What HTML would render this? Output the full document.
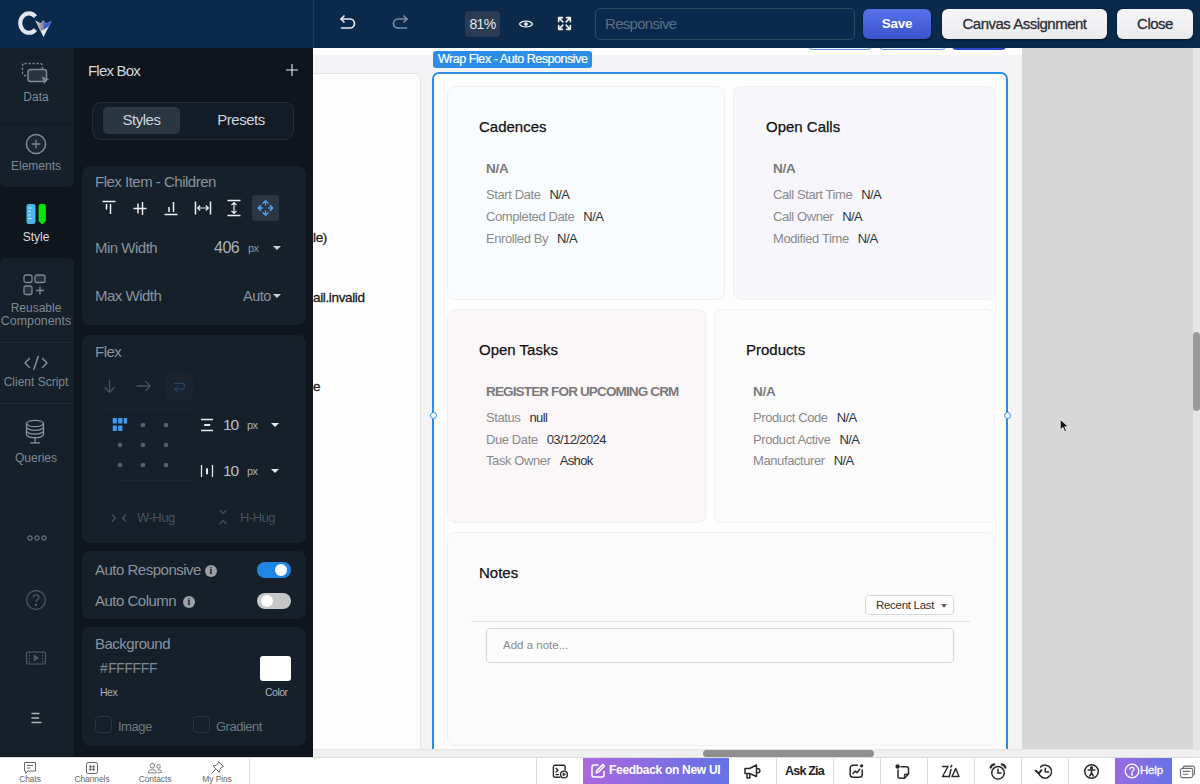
<!DOCTYPE html>
<html lang="en">
<head>
<meta charset="utf-8">
<title>Canvas Builder</title>
<style>
*{box-sizing:border-box;margin:0;padding:0}
html,body{width:1200px;height:784px;overflow:hidden;background:#f2f3f5;font-family:"Liberation Sans",sans-serif;}
.abs{position:absolute}
#root{position:relative;width:1200px;height:784px;overflow:hidden}
/* top bar */
#topbar{position:absolute;left:0;top:0;width:1200px;height:48px;background:#0a294b}
#topbar .sep{position:absolute;left:313px;top:0;width:1px;height:48px;background:#1d3857}
.tbtn{position:absolute;top:10px;height:28px;border-radius:6px;background:linear-gradient(#f6f6f8,#ebebee);color:#2a2e36;letter-spacing:-.5px;-webkit-text-stroke:.3px #2a2e36;font-size:15px;line-height:28px;text-align:center;box-shadow:0 1px 2px rgba(0,0,0,.5)}
/* sidebar */
#side{position:absolute;left:0;top:48px;width:74px;height:709px;background:#0f151d}
.sbg{position:absolute;left:0;width:74px;background:#15202b;border-radius:6px}
.sitem{position:absolute;left:0;width:72px;text-align:center;color:#7d8894;font-size:12px;line-height:14px}
/* panel */
#panel{letter-spacing:-.5px;position:absolute;left:74px;top:48px;width:239px;height:709px;background:#0f151d}
.card{position:absolute;left:8px;width:224px;background:#15202b;border-radius:8px}
.lbl{position:absolute;color:#8a939e;font-size:15px;line-height:18px;white-space:nowrap}
.tri{position:absolute;width:0;height:0;border-left:4px solid transparent;border-right:4px solid transparent;border-top:4.5px solid #c9ced4}
.info{position:absolute;width:12px;height:12px;margin-top:-.5px;border-radius:6px;background:#9aa2ab;color:#15202b;font-size:10px;line-height:12px;font-weight:bold;text-align:center;letter-spacing:0;font-family:"Liberation Serif",serif}
/* canvas */
#canvas{position:absolute;left:313px;top:48px;width:887px;height:709px;background:#f4f4f7;overflow:hidden}
.wcard{position:absolute;border:1px solid #eef0f3;border-radius:8px}
.h{position:absolute;font-size:15px;color:#111;white-space:nowrap;line-height:18px;-webkit-text-stroke:.25px #111}
.na{position:absolute;letter-spacing:-.3px;font-size:13.5px;font-weight:bold;color:#7a7a7a;white-space:nowrap;line-height:16px}
.f{position:absolute;letter-spacing:-.4px;font-size:13px;color:#8a8a8a;white-space:nowrap;line-height:16px}
.f b{font-weight:normal;color:#2b323b;margin-left:9px;letter-spacing:-.6px}
.lt{font-size:13.5px;line-height:16px;color:#1a1a1a;white-space:nowrap;letter-spacing:-.35px;-webkit-text-stroke:.3px #1a1a1a}
.hd{width:7px;height:7px;margin:.5px;border-radius:4px;border:1.3px solid #2b8de8;background:#fff}
/* bottom */
#bottom{position:absolute;left:0;top:757px;width:1200px;height:27px;background:#fff;border-top:1px solid #dcdcdc}
.bl{position:absolute;top:16px;width:40px;text-align:center;font-size:8.5px;line-height:10px;color:#666;white-space:nowrap;letter-spacing:-.1px}
.vs{position:absolute;top:0;width:1px;height:27px;background:#dcdcdc}
</style>
</head>
<body>
<div id="root">

<!-- CANVAS -->
<div id="canvas">
<div class="abs" style="left:0;top:0;width:709px;height:7px;background:#fdfdfe"></div>
<div class="abs" style="left:709px;top:0;width:171px;height:709px;background:#d7d7d7"></div>
<div class="abs" style="left:880px;top:0;width:7px;height:709px;background:#e6e6e6"></div>
<div class="abs" style="left:495px;top:-20px;width:64px;height:22px;border:1px solid #6a9ae6;border-radius:4px;background:#f4f8ff"></div>
<div class="abs" style="left:566px;top:-20px;width:67px;height:22px;border:1px solid #6a9ae6;border-radius:4px;background:#f4f8ff"></div>
<div class="abs" style="left:639px;top:-20px;width:54px;height:22px;border-radius:4px;background:#2f48d6"></div>
<div class="abs" style="left:-10px;top:25px;width:118px;height:700px;border:1px solid #e3e5e9;border-radius:7px;background:#fdfdfd"></div>
<div class="abs lt" style="left:0;top:182px">le)</div>
<div class="abs lt" style="left:0;top:242px">ail.invalid</div>
<div class="abs lt" style="left:0;top:331px">e</div>
<div class="abs" style="left:120px;top:3px;width:159px;height:17px;border-radius:3px;background:#2b8de8;color:#fff;font-size:12.5px;line-height:16px;padding-left:5px;white-space:nowrap;letter-spacing:-.45px;-webkit-text-stroke:.2px #fff">Wrap Flex - Auto Responsive</div>
<div class="abs" style="left:119px;top:24px;width:576px;height:700px;border:2px solid #2b8de8;border-radius:7px;background:#fdfdfe"></div>
<div class="wcard" style="left:134px;top:38px;width:278px;height:214px;background:#f9fcfe"></div>
<div class="wcard" style="left:420px;top:38px;width:263px;height:214px;background:#f6f6fb"></div>
<div class="wcard" style="left:134px;top:261px;width:259px;height:214px;background:#fbf6f8"></div>
<div class="wcard" style="left:401px;top:261px;width:281px;height:214px;background:#fbfbfc"></div>
<div class="wcard" style="left:134px;top:484px;width:548px;height:214px;background:#fbfbfc"></div>
<div class="h" style="left:166px;top:70px">Cadences</div>
<div class="na" style="left:173px;top:112.5px;">N/A</div>
<div class="f" style="left:173px;top:139px">Start Date<b>N/A</b></div>
<div class="f" style="left:173px;top:160.7px">Completed Date<b>N/A</b></div>
<div class="f" style="left:173px;top:182.5px">Enrolled By<b>N/A</b></div>
<div class="h" style="left:453px;top:70px">Open Calls</div>
<div class="na" style="left:460px;top:112.5px;">N/A</div>
<div class="f" style="left:460px;top:139px">Call Start Time<b>N/A</b></div>
<div class="f" style="left:460px;top:160.7px">Call Owner<b>N/A</b></div>
<div class="f" style="left:460px;top:182.5px">Modified Time<b>N/A</b></div>
<div class="h" style="left:166px;top:293px">Open Tasks</div>
<div class="na" style="left:173px;top:335.5px;width:194px;overflow:hidden;letter-spacing:-.85px">REGISTER FOR UPCOMING CRM W</div>
<div class="f" style="left:173px;top:361.5px">Status<b>null</b></div>
<div class="f" style="left:173px;top:383.5px">Due Date<b>03/12/2024</b></div>
<div class="f" style="left:173px;top:405.3px">Task Owner<b>Ashok</b></div>
<div class="h" style="left:433px;top:293px">Products</div>
<div class="na" style="left:440px;top:335.5px;">N/A</div>
<div class="f" style="left:440px;top:361.5px">Product Code<b>N/A</b></div>
<div class="f" style="left:440px;top:383.5px">Product Active<b>N/A</b></div>
<div class="f" style="left:440px;top:405.3px">Manufacturer<b>N/A</b></div>
<div class="h" style="left:166px;top:516px">Notes</div>
<div class="abs" style="left:552px;top:547px;width:89px;height:20px;border:1px solid #d6d8dc;border-radius:4px;background:#fff;font-size:11.5px;line-height:18px;color:#333;padding-left:10px;white-space:nowrap;letter-spacing:-.3px">Recent Last<span class="tri" style="left:75px;top:8px;border-top-color:#666;border-left-width:3.5px;border-right-width:3.5px;border-top-width:4px"></span></div>
<div class="abs" style="left:158px;top:573px;width:499px;height:1px;background:#e2e3e6"></div>
<div class="abs" style="left:173px;top:580px;width:468px;height:35px;border:1px solid #d6d8dc;border-radius:4px;background:#fcfcfc;font-size:11.5px;line-height:33px;color:#8a8a8a;padding-left:16px">Add a note...</div>
<div class="abs hd" style="left:116px;top:363px"></div><div class="abs hd" style="left:690px;top:363px"></div>
<div class="abs" style="left:0;top:701px;width:887px;height:9px;background:#f0f0f0;border-top:1px solid #e4e4e4"></div>
<div class="abs" style="left:390px;top:702px;width:171px;height:7px;border-radius:4px;background:#8e8e8e"></div>
<div class="abs" style="left:880px;top:284px;width:7px;height:79px;border-radius:4px;background:#9b9b9b"></div>
<svg class="abs" style="left:746px;top:370px" width="11" height="16" viewBox="0 0 14 20"><path d="M1.5 1.5V15L5 11.8L7.3 17.3L9.6 16.3L7.3 11H12Z" fill="#111" stroke="#f4f4f4" stroke-width="1.1"/></svg>
</div>

<!-- SIDEBAR -->
<div id="side">
<div class="sbg" style="top:0;height:139px;border-radius:0 0 6px 6px"></div>
<div class="abs" style="left:0;top:75px;width:73px;height:2px;background:#131c26"></div>
<div class="sbg" style="top:210px;height:84px;border-radius:6px 6px 0 0"></div>
<div class="sbg" style="top:295px;height:60px;border-radius:0"></div>
<div class="sbg" style="top:356px;height:353px;border-radius:0"></div>
<div class="abs" style="left:0;top:294px;width:73px;height:1px;background:#1f2a35"></div>
<div class="abs" style="left:0;top:355px;width:73px;height:1px;background:#1f2a35"></div>
<!-- Data -->
<svg class="abs" style="left:20px;top:13px" width="32" height="26" viewBox="0 0 32 26" fill="none">
 <rect x="2.5" y="2.5" width="20" height="12" rx="2" stroke="#7d8894" stroke-width="1.3" stroke-dasharray="2.2 1.8"/>
 <rect x="8" y="8.5" width="18.5" height="12" rx="2.5" fill="#2a3440" stroke="#7d8894" stroke-width="1.5"/>
 <path d="M21.5 15.5 L29.5 18.2 L26 19.6 L24.6 23.2 Z" fill="#7d8894"/>
</svg>
<div class="sitem" style="top:42px">Data</div>
<!-- Elements -->
<svg class="abs" style="left:25px;top:85px" width="22" height="22" viewBox="0 0 22 22" fill="none" stroke="#7d8894" stroke-width="1.3">
 <circle cx="11" cy="11" r="9.6" fill="#1c2732" stroke-width="1.5"/><path d="M11 6.8V15.2M6.8 11H15.2"/>
</svg>
<div class="sitem" style="top:111px">Elements</div>
<!-- Style -->
<svg class="abs" style="left:25px;top:155px" width="22" height="22" viewBox="0 0 22 22">
 <rect x="1.5" y="1" width="9" height="20" rx="2.2" fill="#49b6ee"/>
 <path d="M3.5 5h3M3.5 8.5h2M3.5 12h2M3.5 15.5h3" stroke="#d9f0fb" stroke-width="1"/>
 <path d="M13.6 3.2 a2.2 2.2 0 0 1 2.2-2.2 h2.9 a2.2 2.2 0 0 1 2.2 2.2 V17 Q20.9 18 19.5 19.6 Q17.8 21.4 17.2 21.4 Q16.6 21.4 15 19.6 Q13.6 18 13.6 17Z" fill="#05e40a"/>
</svg>
<div class="sitem" style="top:182px;color:#dedede">Style</div>
<!-- Reusable -->
<svg class="abs" style="left:23px;top:226px" width="24" height="22" viewBox="0 0 24 22" fill="none" stroke="#7d8894" stroke-width="1.3">
 <rect x="1" y="1" width="8" height="7.5" rx="2"/><rect x="12" y="1" width="10" height="7.5" rx="2" fill="#27313c"/>
 <rect x="1" y="12" width="8" height="8.5" rx="2" fill="#27313c"/><path d="M17 12.5V20.5M13 16.5H21"/>
</svg>
<div class="sitem" style="top:253.5px;line-height:13px;font-size:12px">Reusable<br><span style="font-size:12.4px">Components</span></div>
<!-- Client Script -->
<svg class="abs" style="left:23px;top:307px" width="26" height="16" viewBox="0 0 26 16" fill="none" stroke="#8a949f" stroke-width="1.4" stroke-linecap="round" stroke-linejoin="round">
 <path d="M6.5 3.5 L2 8 L6.5 12.5"/><path d="M19.5 3.5 L24 8 L19.5 12.5"/><path d="M15.2 1.5 L10.8 14.5"/>
</svg>
<div class="sitem" style="top:327px">Client Script</div>
<!-- Queries -->
<svg class="abs" style="left:24px;top:371px" width="22" height="26" viewBox="0 0 22 26" fill="none" stroke="#8a949f" stroke-width="1.3">
 <ellipse cx="11" cy="4.5" rx="8.5" ry="3.2"/><path d="M2.5 4.5V15.5C2.5 17.3 6.3 18.7 11 18.7S19.5 17.3 19.5 15.5V4.5"/>
 <path d="M2.5 8.2C2.5 10 6.3 11.4 11 11.4S19.5 10 19.5 8.2M2.5 11.9C2.5 13.7 6.3 15.1 11 15.1S19.5 13.7 19.5 11.9"/>
 <path d="M11 18.7V23.5M6 23.8H16"/>
</svg>
<div class="sitem" style="top:403px">Queries</div>
<!-- dots -->
<svg class="abs" style="left:26px;top:486px" width="22" height="8" viewBox="0 0 22 8" fill="none" stroke="#7d8894" stroke-width="1">
 <circle cx="4" cy="4" r="2.2"/><circle cx="11" cy="4" r="2.2"/><circle cx="18" cy="4" r="2.2"/>
</svg>
<!-- help -->
<svg class="abs" style="left:25px;top:541px" width="22" height="22" viewBox="0 0 22 22" fill="none" stroke="#4f5b68" stroke-width="1.2">
 <circle cx="11" cy="11" r="9.4"/><path d="M8 8.6C8 6.8 9.3 5.8 11 5.8S14 6.9 14 8.5C14 10.6 11 10.6 11 13"/><circle cx="11" cy="15.8" r=".6" fill="#4f5b68"/>
</svg>
<!-- video -->
<svg class="abs" style="left:25px;top:601px" width="22" height="18" viewBox="0 0 22 18" fill="none" stroke="#4f5b68" stroke-width="1.2">
 <rect x="1.5" y="3" width="19" height="12" rx="1.5"/><path d="M4.5 3V15M17.5 3V15" stroke-dasharray="1.5 1.5"/><path d="M9.2 6.5L13.2 9L9.2 11.5Z" fill="#4f5b68"/>
</svg>
<!-- list -->
<svg class="abs" style="left:30px;top:663px" width="12" height="14" viewBox="0 0 12 14" fill="none" stroke="#aeb5bd" stroke-width="1.3">
 <path d="M1.5 2.5H9.5M1.5 7H9M1.5 11.5H11.5"/>
</svg>
</div>

<!-- PANEL -->
<div id="panel">
<div class="abs" style="left:14px;top:14px;font-size:15px;line-height:18px;color:#d3d7dc;letter-spacing:-.8px">Flex Box</div>
<svg class="abs" style="left:212px;top:16px" width="12" height="12" viewBox="0 0 12 12" stroke="#e8ebee" stroke-width="1.1"><path d="M6 0V12M0 6H12"/></svg>
<!-- tabs -->
<div class="abs" style="left:18px;top:54px;width:202px;height:38px;border:1px solid #222e3b;border-radius:9px;background:#131c26"></div>
<div class="abs" style="left:29px;top:59px;width:77px;height:27px;border-radius:5px;background:#2a3642"></div>
<div class="abs" style="left:29px;top:63px;width:77px;text-align:center;font-size:15px;line-height:18px;color:#cfd4da">Styles</div>
<div class="abs" style="left:127px;top:63px;width:80px;text-align:center;font-size:15px;line-height:18px;color:#cfd4da">Presets</div>

<!-- card 1 -->
<div class="card" style="top:118px;height:159px"></div>
<div class="lbl" style="left:21px;top:125px">Flex Item - Children</div>
<svg class="abs" style="left:21px;top:147px" width="186" height="26" viewBox="0 0 186 26" fill="none" stroke="#eef0f3" stroke-width="1.5" stroke-linecap="butt">
 <!-- align top : center 14 -->
 <path d="M7.5 6.5H20.5"/><path d="M11.5 9V14.5M15.5 9V19"/>
 <!-- align middle : center 45 -->
 <path d="M38.5 13.5H51.5"/><path d="M43 8.5V18.5M47.5 7V20"/>
 <!-- align bottom : center 76 -->
 <path d="M69.5 19.5H82.5"/><path d="M74 12V17M78.5 7V17"/>
 <!-- stretch h : center 108 -->
 <path d="M100.5 6.5V19.5M115.5 6.5V19.5"/><path d="M103 13H113M105.2 10.5L102.7 13L105.2 15.5M110.8 10.5L113.3 13L110.8 15.5" stroke-width="1.2"/>
 <!-- stretch v : center 139 -->
 <path d="M132.5 5.5H145.5M132.5 20.5H145.5"/><path d="M139 8V18M136.5 10.2L139 7.7L141.5 10.2M136.5 15.8L139 18.3L141.5 15.8" stroke-width="1.2"/>
 <!-- move selected : center 170 -->
 <rect x="157" y="0" width="27" height="26" rx="3" fill="#2a3642" stroke="none"/>
 <g stroke="#4ea6f2" stroke-width="1.3" stroke-linecap="round" stroke-linejoin="round">
  <path d="M170.5 6V10M168 8.2L170.5 5.7L173 8.2"/><path d="M170.5 20V16M168 17.8L170.5 20.3L173 17.8"/>
  <path d="M163.5 13H167.5M165.7 10.5L163.2 13L165.7 15.5"/><path d="M177.5 13H173.5M175.3 10.5L177.8 13L175.3 15.5"/>
 </g>
</svg>
<div class="lbl" style="left:21px;top:191px">Min Width</div>
<div class="abs" style="left:140px;top:190px;font-size:16px;line-height:20px;color:#aab1ba">406</div>
<div class="abs" style="left:174px;top:194px;font-size:11px;line-height:13px;color:#8a939e">px</div>
<div class="tri" style="left:199px;top:198px"></div>
<div class="lbl" style="left:21px;top:239px">Max Width</div>
<div class="abs" style="left:169px;top:239px;font-size:14.5px;line-height:18px;color:#8a939e">Auto</div>
<div class="tri" style="left:199px;top:246px"></div>

<!-- card 2 -->
<div class="card" style="top:287px;height:208px"></div>
<div class="lbl" style="left:21px;top:295px">Flex</div>
<svg class="abs" style="left:24px;top:324px" width="100" height="30" viewBox="0 0 100 30" fill="none" stroke="#47525e" stroke-width="1.3" stroke-linecap="round" stroke-linejoin="round">
 <path d="M11.5 8V20M7 15.8L11.5 20.3L16 15.8"/>
 <path d="M39 14H52M47.8 9.5L52.3 14L47.8 18.5"/>
 <rect x="67" y="1" width="28" height="27" rx="4" fill="#19242f" stroke="none"/>
 <path d="M77 17H84A2.8 2.8 0 0 0 84 11.4H77M79.2 14.8L77 17L79.2 19.2" stroke="#2a4663" stroke-width="1.2"/>
</svg>
<div class="abs" style="left:26px;top:361px;width:90px;height:1px;background:#1d2833"></div>
<div class="abs" style="left:46px;top:432px;width:72px;height:1px;background:#1d2833"></div>
<svg class="abs" style="left:36px;top:367px" width="66" height="60" viewBox="0 0 66 60">
 <g fill="#3b9bf0"><rect x="2.7" y="3" width="4.2" height="5.6" rx=".6"/><rect x="8.2" y="3" width="4.2" height="5.6" rx=".6"/><rect x="13.7" y="3" width="3.4" height="5.6" rx=".6"/>
 <rect x="2.7" y="10.4" width="4.2" height="5.6" rx=".6"/><rect x="8.2" y="10.4" width="4.2" height="5.6" rx=".6"/></g>
 <g fill="#55606c"><circle cx="33" cy="10" r="2.3"/><circle cx="56" cy="10" r="2.3"/>
 <circle cx="10" cy="30" r="2.3"/><circle cx="33" cy="30" r="2.3"/><circle cx="56" cy="30" r="2.3"/>
 <circle cx="10" cy="50" r="2.3"/><circle cx="33" cy="50" r="2.3"/><circle cx="56" cy="50" r="2.3"/></g>
</svg>
<svg class="abs" style="left:126px;top:370px" width="14" height="14" viewBox="0 0 14 14" stroke="#e8ebee" stroke-width="1.3" fill="none"><path d="M1 1.5H13M1 12.5H13"/><path d="M4.2 7H10.2" stroke-width="2"/></svg>
<div class="abs" style="left:149px;top:367px;font-size:15.5px;line-height:20px;color:#b9c0c8;letter-spacing:-1.1px">10</div>
<div class="abs" style="left:173px;top:371px;font-size:11px;line-height:13px;color:#aab1ba">px</div>
<div class="tri" style="left:197px;top:375px;border-top-color:#e8ebee"></div>
<svg class="abs" style="left:126px;top:416px" width="14" height="14" viewBox="0 0 14 14" stroke="#e8ebee" stroke-width="1.3" fill="none"><path d="M1.5 1V13M12.5 1V13"/><path d="M7 4.2V10.2" stroke-width="2"/></svg>
<div class="abs" style="left:149px;top:413px;font-size:15.5px;line-height:20px;color:#b9c0c8;letter-spacing:-1.1px">10</div>
<div class="abs" style="left:173px;top:417px;font-size:11px;line-height:13px;color:#aab1ba">px</div>
<div class="tri" style="left:197px;top:421px;border-top-color:#e8ebee"></div>
<svg class="abs" style="left:36px;top:464px" width="18" height="12" viewBox="0 0 18 12" fill="none" stroke="#47525e" stroke-width="1.2"><path d="M2 2.5L5.5 6L2 9.5M16 2.5L12.5 6L16 9.5"/></svg>
<div class="abs" style="left:63px;top:462px;font-size:13px;line-height:16px;color:#47525e">W-Hug</div>
<svg class="abs" style="left:143px;top:459px" width="12" height="20" viewBox="0 0 12 20" fill="none" stroke="#47525e" stroke-width="1.2"><path d="M2.5 3L6 6.5L9.5 3M2.5 17L6 13.5L9.5 17"/></svg>
<div class="abs" style="left:166px;top:462px;font-size:13px;line-height:16px;color:#47525e">H-Hug</div>

<!-- card 3 -->
<div class="card" style="top:503px;height:68px"></div>
<div class="lbl" style="left:21px;top:513px">Auto Responsive</div>
<div class="info" style="left:131px;top:517px">i</div>
<div class="abs" style="left:183px;top:514px;width:34px;height:16px;border-radius:8px;background:#1f86e6"><div class="abs" style="right:4px;top:2px;width:12px;height:12px;border-radius:6px;background:#fff"></div></div>
<div class="lbl" style="left:21px;top:544px">Auto Column</div>
<div class="info" style="left:109px;top:548px">i</div>
<div class="abs" style="left:183px;top:545px;width:34px;height:16px;border-radius:8px;background:#c6c7c9"><div class="abs" style="left:4px;top:2px;width:12px;height:12px;border-radius:6px;background:#fff"></div></div>

<!-- card 4 -->
<div class="card" style="top:579px;height:119px"></div>
<div class="lbl" style="left:21px;top:587px">Background</div>
<div class="abs" style="left:26px;top:611px;font-size:14px;line-height:18px;color:#7f8893;letter-spacing:-.4px">#&#8202;FFFFFF</div>
<div class="abs" style="left:26px;top:638px;font-size:10.5px;line-height:12px;color:#aab1ba">Hex</div>
<div class="abs" style="left:186px;top:608px;width:31px;height:25px;border-radius:3px;background:#fff"></div>
<div class="abs" style="left:191px;top:638px;font-size:10.5px;line-height:12px;color:#aab1ba">Color</div>
<div class="abs" style="left:21px;top:668px;width:17px;height:17px;border-radius:4px;border:1px solid #2a3541"></div>
<div class="abs" style="left:44px;top:671px;font-size:13px;line-height:16px;color:#6e7883">Image</div>
<div class="abs" style="left:119px;top:668px;width:17px;height:17px;border-radius:4px;border:1px solid #2a3541"></div>
<div class="abs" style="left:142px;top:671px;font-size:13px;line-height:16px;color:#6e7883">Gradient</div>
</div>

<!-- TOPBAR -->
<div id="topbar">
<div class="sep"></div>
<!-- logo -->
<svg class="abs" style="left:14px;top:8px" width="44" height="34" viewBox="0 0 44 34">
 <defs><linearGradient id="lg" x1="0" y1="0" x2="1" y2="0"><stop offset="0" stop-color="#cfcfd2"/><stop offset="1" stop-color="#85868a"/></linearGradient></defs>
 <path d="M21.4 8.6 A8.7 9.7 0 1 0 21.4 21.6" fill="none" stroke="#e3e6ec" stroke-width="4.1" stroke-linecap="butt"/>
 <path d="M21.3 12.5 L26.8 15.6 L29.3 12.2 L32.2 15.8 L37.6 13 L29.5 28.9 Z" fill="#ececf0"/>
 <path d="M22.3 13.2 L26.8 15.6 L29.3 12.2 L29.3 22 L26.8 23 Z" fill="url(#lg)"/>
 <path d="M29.3 12.2 L32.2 15.8 L37.6 13 L34.6 18.6 L29.3 22 Z" fill="#3a5ad8"/>
</svg>
<!-- undo -->
<svg class="abs" style="left:338px;top:13px" width="20" height="20" viewBox="0 0 20 20" fill="none" stroke="#e6eaf0" stroke-width="1.7" stroke-linecap="round" stroke-linejoin="round">
 <path d="M6 3 L3 6 L6 9"/><path d="M3.2 6 H12 A4.5 4.5 0 0 1 12 15 H3.5"/>
</svg>
<!-- redo -->
<svg class="abs" style="left:390px;top:13px" width="20" height="20" viewBox="0 0 20 20" fill="none" stroke="#7b8a9f" stroke-width="1.7" stroke-linecap="round" stroke-linejoin="round">
 <path d="M14 3 L17 6 L14 9"/><path d="M16.8 6 H8 A4.5 4.5 0 0 0 8 15 H16.5"/>
</svg>
<div class="abs" style="left:465px;top:11px;width:35px;height:26px;border-radius:4px;background:#2b3b52;color:#e3e6ea;font-size:14px;line-height:26px;text-align:center;letter-spacing:-.7px">81%</div>
<!-- eye -->
<svg class="abs" style="left:518px;top:17px" width="16" height="14" viewBox="0 0 18 16" fill="none" stroke="#eef1f5" stroke-width="1.5">
 <path d="M1.5 8 C4 3.6 14 3.6 16.5 8 C14 12.4 4 12.4 1.5 8Z"/><circle cx="9" cy="8" r="2.1" fill="#eef1f5" stroke="none"/>
</svg>
<!-- expand -->
<svg class="abs" style="left:557px;top:16px" width="15" height="15" viewBox="0 0 18 18" fill="none" stroke="#eef1f5" stroke-width="2" stroke-linecap="round" stroke-linejoin="round">
 <path d="M2 6.5 V2 H6.5 M2.3 2.3 L7 7"/><path d="M11.5 2 H16 V6.5 M15.7 2.3 L11 7"/><path d="M2 11.5 V16 H6.5 M2.3 15.7 L7 11"/><path d="M11.5 16 H16 V11.5 M15.7 15.7 L11 11"/>
</svg>
<div class="abs" style="left:595px;top:8px;width:260px;height:32px;border:1px solid #33475f;border-radius:5px;color:#5c6e86;font-size:15px;line-height:30px;padding-left:9px;letter-spacing:-.7px">Responsive</div>
<div class="tbtn" style="left:863px;top:9px;width:68px;height:30px;line-height:30px;background:linear-gradient(#5672ea,#3b53cb);color:#fff;-webkit-text-stroke:0;font-weight:bold;font-size:13.5px;letter-spacing:-.3px">Save</div>
<div class="tbtn" style="left:942px;top:9px;width:165px;height:30px;line-height:30px">Canvas Assignment</div>
<div class="tbtn" style="left:1117px;top:9px;width:76px;height:30px;line-height:30px">Close</div>
</div>

<!-- BOTTOM -->
<div id="bottom">
<!-- left tabs -->
<svg class="abs" style="left:22px;top:3px" width="16" height="14" viewBox="0 0 16 14" fill="none" stroke="#6a6a6a" stroke-width="1"><path d="M2.5 1.5H13.5V10H6L3.5 12.3V10H2.5Z"/><path d="M5 4.5H11M5 7H8.5"/></svg>
<div class="bl" style="left:10px">Chats</div>
<svg class="abs" style="left:85px;top:3px" width="14" height="14" viewBox="0 0 14 14" fill="none" stroke="#6a6a6a" stroke-width="1"><rect x="1.5" y="1.5" width="11" height="11" rx="1.5"/><path d="M5.6 4L5 10M9 4L8.4 10M4 5.8H10.2M3.8 8.3H10"/></svg>
<div class="bl" style="left:72px">Channels</div>
<svg class="abs" style="left:147px;top:4px" width="16" height="12.5" viewBox="0 0 18 14" fill="none" stroke="#6a6a6a" stroke-width="1"><circle cx="6" cy="4.2" r="2.6"/><path d="M1.5 12.2C1.5 9.6 3.4 8.6 6 8.6S10.5 9.6 10.5 12.2Z"/><circle cx="13" cy="5" r="2"/><path d="M12 8.8H13.5C15.5 8.8 16.5 9.8 16.5 11.7H12"/></svg>
<div class="bl" style="left:135px">Contacts</div>
<svg class="abs" style="left:210px;top:2px" width="15" height="15" viewBox="0 0 15 15" fill="none" stroke="#6a6a6a" stroke-width="1" stroke-linejoin="round"><path d="M8.5 1.5L13.5 6.5L11.8 7L9.8 9.5L9.3 12.3L3 6L5.8 5.5L8 3.3Z"/><path d="M5.8 9.2L1.5 13.5"/></svg>
<div class="bl" style="left:197px">My Pins</div>
<div class="vs" style="left:249px"></div>
<!-- right cells -->
<div class="vs" style="left:536px"></div>
<svg class="abs" style="left:552px;top:6px" width="17" height="15" viewBox="0 0 17 15" fill="none" stroke="#2a2a2a" stroke-width="1.4" stroke-linejoin="round" stroke-linecap="round"><path d="M8 13.3H3A1.6 1.6 0 0 1 1.4 11.7V2.8A1.6 1.6 0 0 1 3 1.2H11.5A1.6 1.6 0 0 1 13.1 2.8V6"/><path d="M4 4.3L6 6.2L4 8.1M4 10.6H6.5"/><circle cx="12" cy="10.5" r="3.4"/><path d="M11 9V12L13.5 10.5Z" fill="#2a2a2a" stroke-width=".6"/></svg>
<div class="abs" style="left:583px;top:0;width:146px;height:27px;background:linear-gradient(90deg,#ab68df,#8a6ce3 45%,#6373e6)"></div>
<svg class="abs" style="left:590px;top:5px" width="16" height="16" viewBox="0 0 16 16" fill="none" stroke="#fff" stroke-width="1.5" stroke-linecap="round" stroke-linejoin="round"><path d="M8 2H4A2 2 0 0 0 2 4V12A2 2 0 0 0 4 14H12A2 2 0 0 0 14 12V8.5"/><path d="M12.8 1.6L14.4 3.2L8.3 9.3L6.2 9.8L6.7 7.7Z"/></svg>
<div class="abs" style="left:609px;top:5px;font-size:12px;line-height:15px;font-weight:bold;color:#fff;white-space:nowrap;letter-spacing:-.3px">Feedback on New UI</div>
<svg class="abs" style="left:743px;top:5px" width="19" height="17" viewBox="0 0 19 17" fill="none" stroke="#2a2a2a" stroke-width="1.5" stroke-linejoin="round"><path d="M2 5.5H6.5L13.5 2V13.5L6.5 10.5H2Z"/><path d="M4 10.5V15H6.8V10.8"/><path d="M13.5 5.8H15.2C16.5 5.8 16.8 6.5 16.8 7.7S16.5 9.7 15.2 9.7H13.5"/></svg>
<div class="vs" style="left:776px"></div>
<div class="abs" style="left:785px;top:6px;font-size:12.5px;line-height:15px;font-weight:bold;color:#222;white-space:nowrap;letter-spacing:-.8px">Ask Zia</div>
<div class="vs" style="left:833px"></div>
<svg class="abs" style="left:848px;top:5px" width="17" height="17" viewBox="0 0 17 17" fill="none" stroke="#2a2a2a" stroke-width="1.5" stroke-linecap="round" stroke-linejoin="round"><path d="M9.5 2.3H5A2.8 2.8 0 0 0 2.2 5.1V11.5A2.8 2.8 0 0 0 5 14.3H11.5A2.8 2.8 0 0 0 14.3 11.5V7"/><path d="M5 10.5L7.3 8L9 9.8L11.8 6.3"/><circle cx="13.6" cy="2.8" r=".9" fill="#2a2a2a"/></svg>
<div class="vs" style="left:880px"></div>
<svg class="abs" style="left:894px;top:5px" width="18" height="18" viewBox="0 0 18 18" fill="none" stroke="#2a2a2a" stroke-width="1.5" stroke-linecap="round" stroke-linejoin="round"><path d="M7 3.8H12.5A2 2 0 0 1 14.5 5.8V11L10.5 15.2H6A2 2 0 0 1 4 13.2V7"/><path d="M14.3 11.2H12A1.5 1.5 0 0 0 10.5 12.7V15"/><circle cx="3.6" cy="3.6" r="1.5" fill="#2a2a2a"/></svg>
<div class="vs" style="left:927px"></div>
<svg class="abs" style="left:941px;top:6px" width="20" height="15" viewBox="0 0 20 15" fill="none" stroke="#2a2a2a" stroke-width="1.4" stroke-linecap="round" stroke-linejoin="round"><path d="M1.5 2.5H7L1.5 12.5H8"/><path d="M10 5.5L8.3 12.5"/><path d="M10.8 1.5L9.8 3"/><path d="M11 12.5L14.7 4.5L18 12.5Z"/></svg>
<div class="vs" style="left:974px"></div>
<svg class="abs" style="left:988px;top:4px" width="20" height="19" viewBox="0 0 20 19" fill="none" stroke="#2a2a2a" stroke-width="1.5" stroke-linecap="round"><circle cx="10" cy="10.8" r="6.3"/><path d="M10 7.2V11H13"/><path d="M2.6 5.6A4.6 4.6 0 0 1 6.2 2.4M17.4 5.6A4.6 4.6 0 0 0 13.8 2.4" stroke-width="2.2"/></svg>
<div class="vs" style="left:1021px"></div>
<svg class="abs" style="left:1034px;top:4px" width="21" height="19" viewBox="0 0 21 19" fill="none" stroke="#2a2a2a" stroke-width="1.5" stroke-linecap="round" stroke-linejoin="round"><path d="M4.8 11.3A6.5 6.5 0 1 0 6.6 4.9"/><path d="M1.6 8.6L4.8 11.6L7.4 8.2" stroke-width="2"/><path d="M11.3 6.2V10H14.6"/></svg>
<div class="vs" style="left:1068px"></div>
<svg class="abs" style="left:1083px;top:5px" width="17" height="17" viewBox="0 0 19 19" fill="none" stroke="#2a2a2a" stroke-width="1.5" stroke-linecap="round"><circle cx="9.5" cy="9.5" r="7.6" stroke-width="1.7"/><circle cx="9.5" cy="5.4" r="1.1" fill="#2a2a2a"/><path d="M5.8 7.8H13.2M9.5 7.8V11M7.6 14.5L9.5 11L11.4 14.5" stroke-width="1.7"/></svg>
<div class="abs" style="left:1115px;top:0;width:57px;height:27px;background:linear-gradient(90deg,#9a6be2,#6373e6)"></div>
<svg class="abs" style="left:1124px;top:5px" width="16" height="16" viewBox="0 0 16 16" fill="none" stroke="#fff" stroke-width="1.3" stroke-linecap="round"><circle cx="8" cy="8" r="6.8"/><path d="M5.9 6.3C5.9 5 6.8 4.3 8 4.3S10.1 5.1 10.1 6.2C10.1 7.7 8 7.7 8 9.3"/><circle cx="8" cy="11.5" r=".5" fill="#fff"/></svg>
<div class="abs" style="left:1140px;top:5px;font-size:11.5px;line-height:15px;color:#fff;white-space:nowrap;letter-spacing:-.2px;-webkit-text-stroke:.3px #fff">Help</div>
<svg class="abs" style="left:1179px;top:7px" width="17" height="14" viewBox="0 0 17 14" fill="none" stroke="#6e6e6e" stroke-width="1.1" stroke-linejoin="round"><path d="M4.2 3.2V2.6A1.5 1.5 0 0 1 5.7 1.1H14A1.5 1.5 0 0 1 15.5 2.6V8.4A1.5 1.5 0 0 1 14 9.9"/><rect x="1.5" y="3.4" width="12.2" height="9.2" rx="1.8" fill="#fff"/><path d="M3.8 6.4H11.4M3.8 9.2H9.5"/></svg>
</div>

</div>
</body>
</html>
